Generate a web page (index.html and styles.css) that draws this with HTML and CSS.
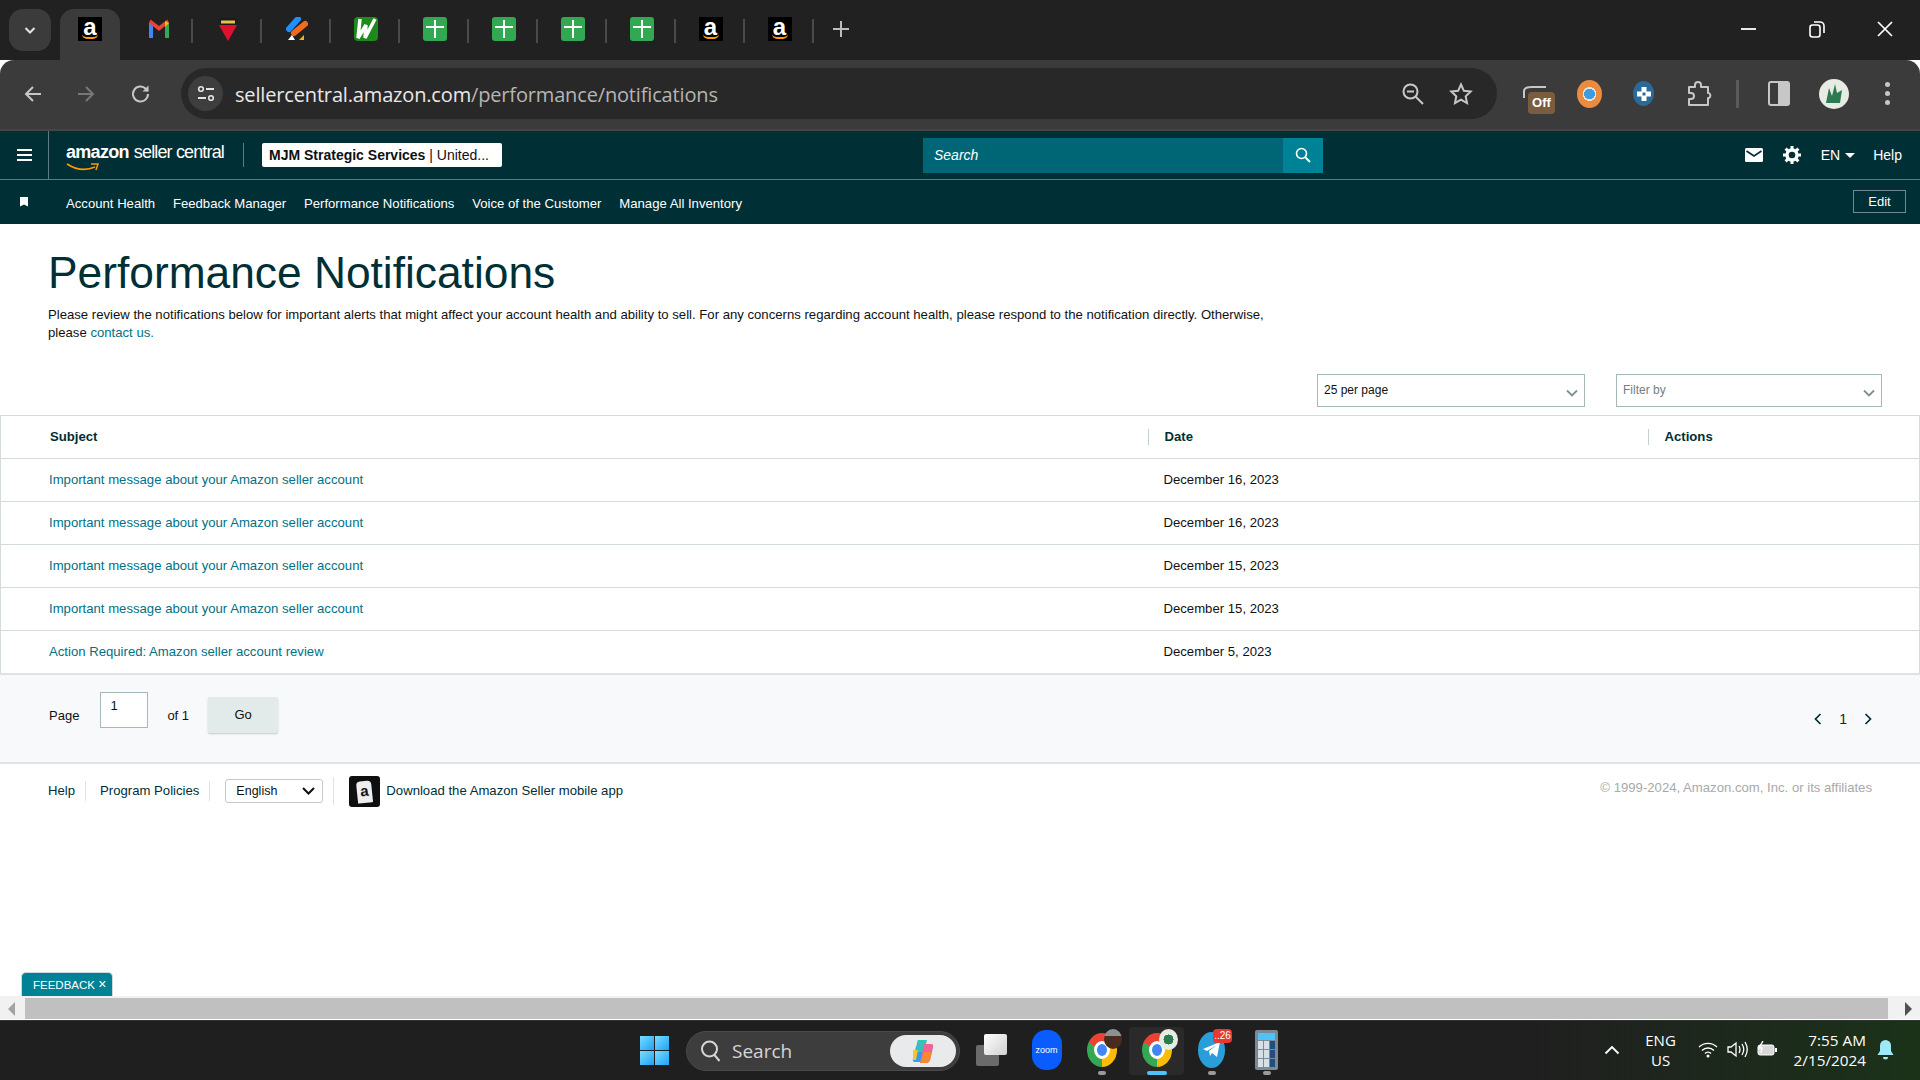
FILE: index.html
```html
<!DOCTYPE html>
<html lang="en">
<head>
<meta charset="UTF-8" />
<meta name="viewport" content="width=device-width, initial-scale=1.0" />
<title>Performance Notifications</title>
<link rel="stylesheet" href="styles.css">
</head>
<body>
<!-- browser tab strip -->
<div class="tabstrip">
  <div class="tab-search"><svg width="14" height="14" viewBox="0 0 14 14"><path d="M2.5 5l4.500 4.500L11.500 5" fill="none" stroke="#e3e3e3" stroke-width="2"/></svg></div>
  <div class="tab active"><span class="fav fav-amazon">a<i></i></span></div>
  <div class="tab sep">
    <svg width="24" height="24" viewBox="0 0 24 24"><path d="M2 21V6l4-2v17z" fill="#4285f4"/><path d="M22 21V6l-4-2v17z" fill="#34a853"/><path d="M2 6l10 8 10-8-1.500-3.500L12 9 3.500 2.500z" fill="#ea4335"/><path d="M18 4l4 2-4 4z" fill="#fbbc04"/></svg>
  </div>
  <div class="tab sep">
    <svg width="24" height="24" viewBox="0 0 24 24"><path d="M3 8h18l-9 16z" fill="#e0102f"/><path d="M4 1h16l1 7H3z" fill="#1b1b1b"/><path d="M5 5h14" stroke="#e7c34a" stroke-width="3"/></svg>
  </div>
  <div class="tab sep">
    <svg width="24" height="24" viewBox="0 0 24 24"><path d="M4 12L13 2" stroke="#1f8fff" stroke-width="6" stroke-linecap="round"/><path d="M9 16L20 7" stroke="#f26a1b" stroke-width="6" stroke-linecap="round"/><path d="M3 23l4-5 3 5z" fill="#fff"/><path d="M14 23l5-5v5z" fill="#f5b400"/></svg>
  </div>
  <div class="tab sep">
    <span class="fav fav-w"><svg width="24" height="24" viewBox="0 0 24 24"><path d="M6 2L4 21 12 8l-1 13L21 2" fill="none" stroke="#fff" stroke-width="3.500"/></svg></span>
  </div>
  <div class="tab sep"><span class="fav fav-plus"></span></div>
  <div class="tab sep"><span class="fav fav-plus"></span></div>
  <div class="tab sep"><span class="fav fav-plus"></span></div>
  <div class="tab sep"><span class="fav fav-plus"></span></div>
  <div class="tab sep"><span class="fav fav-amazon">a<i></i></span></div>
  <div class="tab sep"><span class="fav fav-amazon">a<i></i></span></div>
  <div class="tab-new"><svg width="18" height="18" viewBox="0 0 18 18"><path d="M9 1v16M1 9h16" stroke="#bdbdbd" stroke-width="2"/></svg></div>
  <div class="window-btns">
    <svg width="16" height="16" viewBox="0 0 16 16"><path d="M0 8h15" stroke="#fff" stroke-width="1.800"/></svg>
    <svg width="16" height="18" viewBox="0 0 16 18"><rect x="1" y="5" width="10" height="12" rx="2.500" fill="none" stroke="#fff" stroke-width="1.600"/><path d="M5 2h6a4 4 0 0 1 4 4v7" fill="none" stroke="#fff" stroke-width="1.600"/></svg>
    <svg width="16" height="16" viewBox="0 0 16 16"><path d="M1 1l14 14M15 1L1 15" stroke="#fff" stroke-width="1.700"/></svg>
  </div>
</div>

<!-- browser toolbar -->
<div class="toolbar">
  <svg class="nav-back" width="20" height="20" viewBox="0 0 20 20"><path d="M18 10H3M10 3l-7 7 7 7" fill="none" stroke="#c7c7c7" stroke-width="2"/></svg>
  <svg class="nav-forward" width="20" height="20" viewBox="0 0 20 20"><path d="M2 10h15M10 3l7 7-7 7" fill="none" stroke="#777" stroke-width="2"/></svg>
  <svg class="nav-reload" width="22" height="22" viewBox="0 0 22 22"><path d="M18 11a7.500 7.500 0 1 1-2.200-5.300L18 8" fill="none" stroke="#c7c7c7" stroke-width="2"/><path d="M18.500 2.500V8.500H12.500z" fill="#c7c7c7"/></svg>
  <div class="omnibox">
    <span class="site-info"><svg width="20" height="20" viewBox="0 0 20 20"><circle cx="5" cy="5" r="2.300" fill="none" stroke="#e3e3e3" stroke-width="1.600"/><path d="M10 5h8M2 14h8" stroke="#e3e3e3" stroke-width="1.800"/><circle cx="15" cy="14" r="2.300" fill="none" stroke="#e3e3e3" stroke-width="1.600"/></svg></span>
    <span class="url">sellercentral.amazon.com<span class="url-path">/performance/notifications</span></span>
    <svg class="omni-zoom" width="24" height="24" viewBox="0 0 24 24"><circle cx="9.500" cy="9.500" r="7" fill="none" stroke="#c7c7c7" stroke-width="2"/><path d="M14.500 14.500l7.500 7.500M6 9.500h7" stroke="#c7c7c7" stroke-width="2"/></svg>
    <svg class="omni-star" width="24" height="24" viewBox="0 0 24 24"><path d="M12 2.500l2.900 6.300 6.800.8-5 4.700 1.300 6.800-6-3.400-6 3.400 1.300-6.800-5-4.700 6.800-.8z" fill="none" stroke="#c7c7c7" stroke-width="2"/></svg>
  </div>
  <div class="ext-off"><svg width="26" height="14" viewBox="0 0 26 14"><path d="M2 13V6q0-4 8-4h14" fill="none" stroke="#c7c7c7" stroke-width="2"/></svg><span>Off</span></div>
  <span class="ext-orange"></span>
  <span class="ext-blue"><svg width="16" height="16" viewBox="0 0 16 16"><path d="M5.500 1h5v4.500H15v5h-4.500V15h-5v-4.500H1v-5h4.500z" fill="#fff"/><rect x="6.500" y="6.500" width="3" height="3" fill="#2a6a9a"/></svg></span>
  <svg class="ext-puzzle" width="26" height="26" viewBox="0 0 26 26"><path d="M3 6h6V4a3 3 0 0 1 6 0v2h7v6h1a3 3 0 0 1 0 5h-1v7H3v-6h2a3 3 0 0 0 0-6H3z" fill="none" stroke="#c7c7c7" stroke-width="2" stroke-linejoin="round"/></svg>
  <span class="tool-sep"></span>
  <span class="side-panel"><i></i></span>
  <span class="avatar"><svg width="22" height="24" viewBox="0 0 22 24"><path d="M3 21L6 6l3 8 3-12 2 9 5-3-2 13z" fill="#2c7a4f"/></svg></span>
  <span class="menu-dots"><i></i><i></i><i></i></span>
</div>

<!-- seller central top bar -->
<div class="sc-top">
  <div class="sc-burger"><i></i><i></i><i></i></div>
  <div class="sc-logo">
    <span class="logo-amazon">amazon</span><span class="logo-seller">seller central</span>
    <svg class="logo-smile" width="36" height="9" viewBox="0 0 36 9"><path d="M1 1q14 9 28 3" fill="none" stroke="#f90" stroke-width="1.800"/><path d="M25 1l7 0-2 6" fill="none" stroke="#f90" stroke-width="1.500"/></svg>
  </div>
  <span class="sc-logo-sep"></span>
  <div class="account-box"><b>MJM Strategic Services</b> | United...</div>
  <div class="sc-search">
    <div class="search-input">Search</div>
    <div class="search-btn"><svg width="16" height="16" viewBox="0 0 16 16"><circle cx="6.500" cy="6.500" r="5" fill="none" stroke="#fff" stroke-width="1.600"/><path d="M10 10l5 5" stroke="#fff" stroke-width="2"/></svg></div>
  </div>
  <div class="sc-right">
    <svg width="18" height="14" viewBox="0 0 18 14"><rect width="18" height="14" rx="1.500" fill="#fff"/><path d="M1.500 3L9 8l7.500-5" fill="none" stroke="#002f36" stroke-width="1.600"/></svg>
    <svg class="sc-gear" width="18" height="18" viewBox="0 0 18 18"><circle cx="9" cy="9" r="5" fill="none" stroke="#fff" stroke-width="3.400"/><path d="M9 0v4M9 14v4M0 9h4M14 9h4M2.600 2.600l2.800 2.800M12.600 12.600l2.800 2.800M15.400 2.600l-2.800 2.800M5.400 12.600l-2.800 2.800" stroke="#fff" stroke-width="3"/></svg>
    <span class="sc-lang">EN<i></i></span>
    <span class="sc-help">Help</span>
  </div>
</div>

<!-- seller central bookmarks -->
<div class="sc-nav">
  <span class="bookmark"></span>
  <a>Account Health</a>
  <a>Feedback Manager</a>
  <a>Performance Notifications</a>
  <a>Voice of the Customer</a>
  <a>Manage All Inventory</a>
  <button class="edit-btn">Edit</button>
</div>

<div class="main">
  <div class="intro">
    <h1>Performance Notifications</h1>
    <p><span>Please review the notifications below for important alerts that might affect your account health and ability to sell. For any concerns regarding account health, please respond to the notification directly. Otherwise,</span><br>please <a class="link">contact us.</a></p>
  </div>

  <div class="filters">
    <div class="dropdown perpage">25 per page<svg width="12" height="8" viewBox="0 0 12 8"><path d="M1 1.500l5 5 5-5" fill="none" stroke="#7d9095" stroke-width="1.800"/></svg></div>
    <div class="dropdown filterby">Filter by<svg width="12" height="8" viewBox="0 0 12 8"><path d="M1 1.500l5 5 5-5" fill="none" stroke="#7d9095" stroke-width="1.800"/></svg></div>
  </div>

  <table class="notices">
    <tr>
      <th class="col-subject"><span>Subject</span></th>
      <th class="col-date"><span>Date</span></th>
      <th class="col-actions"><span>Actions</span></th>
    </tr>
    <tr><td><a class="link">Important message about your Amazon seller account</a></td><td>December 16, 2023</td><td></td></tr>
    <tr><td><a class="link">Important message about your Amazon seller account</a></td><td>December 16, 2023</td><td></td></tr>
    <tr><td><a class="link">Important message about your Amazon seller account</a></td><td>December 15, 2023</td><td></td></tr>
    <tr><td><a class="link">Important message about your Amazon seller account</a></td><td>December 15, 2023</td><td></td></tr>
    <tr><td><a class="link">Action Required: Amazon seller account review</a></td><td>December 5, 2023</td><td></td></tr>
  </table>

  <div class="pager">
    <span class="pager-label">Page</span>
    <span class="pager-input">1</span>
    <span class="pager-of">of 1</span>
    <button class="go-btn">Go</button>
    <div class="pager-right">
      <svg width="8" height="12" viewBox="0 0 8 12"><path d="M6.500 1l-5 5 5 5" fill="none" stroke="#002f36" stroke-width="1.700"/></svg>
      <span>1</span>
      <svg width="8" height="12" viewBox="0 0 8 12"><path d="M1.500 1l5 5-5 5" fill="none" stroke="#002f36" stroke-width="1.700"/></svg>
    </div>
  </div>

  <div class="footer">
    <a class="foot-link foot-help">Help</a>
    <a class="foot-link foot-policies">Program Policies</a>
    <div class="lang-select">English<svg width="13" height="8" viewBox="0 0 13 8"><path d="M1 1l5.500 5.500L12 1" fill="none" stroke="#0f1111" stroke-width="2"/></svg></div>
    <span class="foot-sep"></span>
    <span class="app-badge"><span class="app-tag">a</span></span>
    <a class="foot-link">Download the Amazon Seller mobile app</a>
    <span class="copyright">© 1999-2024, Amazon.com, Inc. or its affiliates</span>
  </div>

  <div class="feedback">FEEDBACK <span>×</span></div>
</div>

<!-- horizontal scrollbar -->
<div class="hscroll">
  <div class="hscroll-left"><i></i></div>
  <div class="hscroll-thumb"></div>
  <div class="hscroll-right"><i></i></div>
</div>

<!-- windows taskbar -->
<div class="taskbar">
  <span class="win-logo"><i></i><i></i><i></i><i></i></span>
  <div class="task-search">
    <svg width="22" height="24" viewBox="0 0 22 24"><circle cx="9.500" cy="10" r="7.500" fill="none" stroke="#d6d6d6" stroke-width="2"/><path d="M14.500 16l5 6" stroke="#d6d6d6" stroke-width="2"/></svg>
    <span>Search</span>
    <span class="copilot"><svg width="24" height="26" viewBox="0 0 24 26"><path d="M7 2h8l-4 22H4q-3 0-2-4z" fill="#2f9df0"/><path d="M7 2h9l-3 12H5z" fill="#36c2b4"/><path d="M13 6h7q3 0 2 4l-3 12q-1 3-4 3H9z" fill="#f0649a"/><path d="M13 14h8l-2 8q-1 3-4 3H9z" fill="#f58a32"/><path d="M2 12h5l-2 10H2z" fill="#f3c62f"/></svg></span>
  </div>
  <div class="task-icon"><span class="files-icon"><i></i><b></b></span></div>
  <div class="task-icon"><span class="zoom-icon">zoom</span></div>
  <div class="task-icon running"><span class="chrome"><i></i></span><span class="badge-face"></span></div>
  <div class="task-icon running current"><span class="chrome"><i></i></span><span class="badge-plant"></span></div>
  <div class="task-icon running"><span class="telegram"><svg width="20" height="18" viewBox="0 0 20 18"><path d="M1 8l17-7-3 15-5-4-2 3-1-5 8-6-10 6z" fill="#fff"/></svg></span><span class="badge-count">..26</span></div>
  <div class="task-icon running"><span class="calc"><i class="calc-screen"></i><i></i><i></i><i class="calc-dark"></i><i></i><i></i><i class="calc-dark"></i><i></i><i></i><i class="calc-dark"></i></span></div>
  <div class="tray">
    <svg class="tray-up" width="16" height="10" viewBox="0 0 16 10"><path d="M1.500 8.500L8 2l6.500 6.500" fill="none" stroke="#fff" stroke-width="1.800"/></svg>
    <div class="tray-lang">ENG<br>US</div>
    <svg width="20" height="17" viewBox="0 0 20 17"><path d="M1 6a13 13 0 0 1 18 0M4 9.500a8.500 8.500 0 0 1 12 0M7 12.500a4 4 0 0 1 6 0" fill="none" stroke="#fff" stroke-width="1.400"/><circle cx="10" cy="15" r="1.500" fill="#fff"/></svg>
    <svg width="21" height="17" viewBox="0 0 21 17"><path d="M1 6h3l5-4v13l-5-4H1z" fill="none" stroke="#fff" stroke-width="1.300"/><path d="M12 5q2 3.500 0 7M15 3q3.500 5.500 0 11M18 1q4.500 7.500 0 15" fill="none" stroke="#fff" stroke-width="1.300"/></svg>
    <svg width="21" height="17" viewBox="0 0 21 17"><rect x="1" y="4" width="16" height="10" rx="2" fill="#d8d8d8" stroke="#fff"/><rect x="18" y="7" width="2" height="4" fill="#fff"/><path d="M6 0L2 7h3l-1 5" fill="none" stroke="#fff" stroke-width="1.400"/></svg>
    <div class="tray-clock">7:55 AM<br>2/15/2024</div>
    <svg width="17" height="21" viewBox="0 0 17 21"><path d="M8.500 1a5.500 5.500 0 0 1 5.500 5.500V12l2.500 4H.5L3 12V6.500A5.500 5.500 0 0 1 8.500 1z" fill="#9fe8f7"/><path d="M6 18h5a2.500 2.500 0 0 1-5 0z" fill="#9fe8f7"/></svg>
  </div>
</div>
</body>
</html>
```
FILE: styles.css
```css
* { box-sizing: border-box; }
html, body { margin: 0; padding: 0; height: 100%; overflow: hidden; }
body { width: 1920px; height: 1080px; display: flex; flex-direction: column; font-family: "Liberation Sans", Arial, sans-serif; background: #fff; color: #0f1111; }
i { display: block; font-style: normal; }

/* tab strip */
.tabstrip { height: 60px; background: #202120; display: flex; align-items: flex-end; flex-shrink: 0; }
.tab-search { width: 42px; height: 42px; margin: 0 9px 9px 9px; background: #3b3b3b; border-radius: 14px; display: flex; align-items: center; justify-content: center; }
.tab { width: 69px; height: 51px; display: flex; align-items: center; justify-content: center; padding-bottom: 12px; position: relative; }
.tab.active { width: 60px; background: #3b3b3b; border-radius: 14px 14px 0 0; margin-right: 4px; }
.sep::after { content: ""; position: absolute; right: 0; top: 10px; width: 2px; height: 24px; background: #4a4a4a; }
.fav { width: 24px; height: 24px; display: block; }
.fav-amazon { background: #000; color: #fff; font-size: 24px; font-weight: bold; line-height: 20px; text-align: center; position: relative; }
.fav-amazon i { position: absolute; left: 4px; bottom: 2px; width: 16px; height: 5px; border-bottom: 2px solid #f90; border-radius: 0 0 10px 10px; }
.fav-w { background: #1e8a1e; border-radius: 4px; }
.fav-plus { background: #33a853; border-radius: 3px; position: relative; }
.fav-plus::before { content: ""; position: absolute; left: 11px; top: 3px; width: 2px; height: 18px; background: #fff; }
.fav-plus::after { content: ""; position: absolute; left: 3px; top: 9px; width: 18px; height: 2px; background: #fff; }
.tab-new { width: 53px; height: 51px; display: flex; align-items: center; justify-content: center; padding-bottom: 12px; }
.window-btns { margin-left: auto; height: 60px; display: flex; align-items: center; padding-right: 27px; gap: 52px; padding-bottom: 2px; }

/* toolbar */
.toolbar { height: 71px; background: #3b3b3b; border-bottom: 2px solid #454545; border-radius: 14px 14px 0 0; display: flex; align-items: center; flex-shrink: 0; padding-bottom: 2px; }
.nav-back { margin-left: 23px; }
.nav-forward { margin-left: 33px; }
.nav-reload { margin-left: 34px; }
.omnibox { width: 1316px; height: 51px; margin-left: 29px; background: #282828; border-radius: 26px; display: flex; align-items: center; padding-left: 7px; }
.site-info { width: 35px; height: 35px; background: #3e3e3e; border-radius: 50%; display: flex; align-items: center; justify-content: center; }
.url { margin: 2px 0 0 12px; font-family: "Open Sans", sans-serif; font-size: 20px; color: #e8e8e8; letter-spacing: -0.16px; }
.url-path { color: #b5b5b5; }
.omni-zoom { margin-left: auto; }
.omni-star { margin-left: 24px; margin-right: 24px; }
.ext-off { width: 36px; height: 36px; margin-left: 25px; position: relative; }
.ext-off svg { display: block; margin-top: 9px; }
.ext-off span { position: absolute; left: 6px; top: 16px; width: 27px; height: 22px; background: #7a5c3e; border-radius: 4px; color: #fff; font-size: 13px; font-weight: bold; text-align: center; line-height: 22px; }
.ext-orange { width: 25px; height: 28px; margin-left: 19px; border-radius: 50%; background: radial-gradient(circle, #3d9be0 0 28%, #e9e4d8 29% 36%, #ec8b3d 37% 88%, #ddd 89%); }
.ext-blue { width: 21px; height: 25px; margin-left: 31px; border-radius: 50%; background: #2a6a9a; display: flex; align-items: center; justify-content: center; }
.ext-puzzle { margin-left: 32px; }
.tool-sep { width: 3px; height: 28px; background: #5a5a5a; margin-left: 24px; }
.side-panel { width: 22px; height: 25px; margin-left: 29px; border: 2px solid #c7c7c7; border-radius: 3px; display: flex; justify-content: flex-end; }
.side-panel i { width: 10px; background: #c7c7c7; }
.avatar { width: 30px; height: 30px; margin-left: 29px; border-radius: 50%; background: #e8ebe4; display: flex; align-items: center; justify-content: center; }
.menu-dots { margin-left: 36px; display: flex; flex-direction: column; gap: 4px; }
.menu-dots i { width: 5px; height: 5px; border-radius: 50%; background: #c7c7c7; }

/* seller central header */
.sc-top { height: 49px; background: #002f36; border-bottom: 1px solid #5d7d82; display: flex; align-items: center; flex-shrink: 0; color: #fff; }
.sc-burger { width: 49px; height: 48px; border-right: 1px solid #5d7d82; display: flex; flex-direction: column; justify-content: center; gap: 3px; padding-left: 17px; }
.sc-burger i { width: 15px; height: 2px; background: #fff; }
.sc-logo { margin-left: 17px; width: 177px; height: 40px; position: relative; display: flex; align-items: baseline; padding-top: 7px; color: #fff; }
.logo-amazon { font-size: 18px; font-weight: bold; letter-spacing: -0.7px; }
.logo-seller { font-size: 18px; letter-spacing: -0.85px; margin-left: 5px; white-space: nowrap; }
.logo-smile { position: absolute; left: 0; top: 28px; }
.sc-logo-sep { width: 1px; height: 24px; background: #5d7d82; }
.account-box { width: 240px; height: 24px; margin-left: 18px; padding-left: 7px; background: #fff; border-radius: 2px; color: #0f1111; font-size: 14px; line-height: 24px; white-space: nowrap; }
.account-box b { font-weight: bold; }
.sc-search { margin-left: 421px; display: flex; width: 400px; height: 35px; }
.search-input { flex: 1; background: #006574; font-style: italic; font-size: 14px; line-height: 35px; padding-left: 11px; color: #fff; }
.search-btn { width: 40px; background: #008296; display: flex; align-items: center; justify-content: center; }
.sc-right { margin-left: auto; display: flex; align-items: center; padding-right: 18px; font-size: 14px; }
.sc-gear { margin-left: 20px; }
.sc-lang { margin-left: 20px; display: flex; align-items: center; }
.sc-lang i { width: 0; height: 0; margin-left: 5px; border: 5px solid transparent; border-top-color: #fff; border-bottom: 0; }
.sc-help { margin-left: 18px; }
.sc-nav { height: 44px; background: #002f36; display: flex; align-items: center; flex-shrink: 0; padding: 2px 14px 0 0; color: #fff; font-size: 13.150px; }
.sc-nav a { margin-right: 17.800px; white-space: nowrap; }
.bookmark { width: 8px; height: 10px; margin: 0 38px 3px 20px; background: #fff; clip-path: polygon(0 0, 100% 0, 100% 100%, 50% 80%, 0 100%); }
.edit-btn { margin-left: auto; margin-bottom: 4px; width: 53px; height: 23px; padding: 0; background: transparent; border: 1px solid #6f8b90; color: #fff; font: 13px "Liberation Sans", Arial, sans-serif; }

/* page content */
.main { flex: 1; position: relative; min-height: 0; }
.intro { padding: 0 0 0 48px; width: 1280px; }
h1 { margin: 0; padding-top: 24px; font-size: 44.300px; font-weight: normal; line-height: 50px; color: #002f36; }
.intro p { margin: 8px 0 0 0; font-size: 13.150px; line-height: 18px; color: #0f1111; }
.link { color: #007185; }
.filters { display: flex; padding-left: 1317px; gap: 31px; margin-top: 32px; }
.dropdown { height: 33px; border: 1px solid #a6b7ba; display: flex; align-items: center; justify-content: space-between; padding: 0 6px 2px 6px; font-size: 12px; color: #0f1111; }
.dropdown svg { margin-top: 6px; }
.perpage { width: 268px; }
.filterby { width: 266px; color: #6f7f83; }
.notices { width: 100%; margin-top: 8px; border-collapse: collapse; table-layout: fixed; font-size: 13.150px; border-left: 1px solid #d5dbdb; border-right: 1px solid #d5dbdb; }
.notices th, .notices td { height: 43px; padding: 0; text-align: left; border-bottom: 1px solid #d5dbdb; font-weight: normal; }
.notices tr:first-child th { border-top: 1px solid #d5dbdb; }
.notices td { padding-bottom: 2px; }
.notices tr:last-child td { border-bottom: 0; height: 42px; padding-bottom: 0; }
.notices td:first-child { padding-left: 48px; }
.notices td:nth-child(2) { padding-left: 16px; }
.notices th { font-weight: bold; color: #002f36; padding-bottom: 1px; }
.notices th.col-subject { width: 1147px; padding-left: 49px; }
.col-date { width: 500px; }
.col-date span, .col-actions span { display: block; line-height: 16px; border-left: 1px solid #c5cfd0; }
.col-date span { padding-left: 16px; }
.col-actions span { padding-left: 16px; }
.pager { height: 91px; background: #f8f9fb; border-top: 2px solid #dfe3e6; border-bottom: 2px solid #dfe3e6; display: flex; align-items: flex-start; font-size: 13px; color: #0f1111; padding-left: 49px; }
.pager-label { margin-top: 33px; }
.pager-input { width: 48px; height: 36px; margin: 17px 0 0 21px; padding: 5px 0 0 9px; background: #fff; border: 1px solid #a6b7ba; }
.pager-of { margin: 33px 0 0 19px; }
.go-btn { width: 70px; height: 36px; margin: 22px 0 0 19px; background: #e3eaea; border: 0; border-radius: 2px; box-shadow: 0 1px 2px rgba(0,0,0,0.2); font: 13px "Liberation Sans", Arial, sans-serif; color: #0f1111; }
.pager-right { margin: 36px 48px 0 auto; display: flex; align-items: center; gap: 17px; font-size: 14px; color: #002f36; }
.footer { display: flex; align-items: center; height: 54px; padding: 0 48px; font-size: 13.150px; color: #002f36; }
.foot-help { padding-right: 10px; border-right: 1px solid #e0e3e6; line-height: 20px; }
.foot-policies { padding: 0 10px 0 14px; border-right: 1px solid #e0e3e6; line-height: 20px; }
.lang-select { width: 98px; height: 24px; margin: 0 10px 0 15px; padding: 0 7px 0 10px; border: 1px solid #c5c9cc; border-radius: 3px; display: flex; align-items: center; justify-content: space-between; font-size: 12.500px; color: #0f1111; }
.foot-sep { width: 1px; height: 28px; background: #e0e3e6; }
.app-badge { width: 31px; height: 31px; margin: 2px 6px 0 15px; background: #0f0f0f; border-radius: 3px; display: flex; align-items: center; justify-content: center; }
.app-tag { width: 15px; height: 22px; background: #eee; color: #111; font-size: 15px; font-weight: bold; line-height: 20px; text-align: center; transform: rotate(-6deg); border-radius: 4px 4px 1px 1px; }
.copyright { margin-left: auto; color: #a9a9a9; font-size: 13.150px; margin-bottom: 6px; }
.feedback { position: absolute; left: 21px; bottom: 0; width: 92px; height: 24px; background: #008296; border: 1px solid #cfd8da; border-bottom: 0; border-radius: 5px 5px 0 0; color: #fff; font-size: 11.500px; line-height: 23px; padding-left: 11px; white-space: nowrap; }
.feedback span { font-size: 14px; }

/* scrollbar */
.hscroll { height: 24px; background: #f1f1f1; display: flex; padding-top: 2px; flex-shrink: 0; border-bottom: 1px solid #fff; }
.hscroll-left { width: 25px; display: flex; align-items: center; padding-left: 8px; }
.hscroll-left i { border: 7px solid transparent; border-left: 0; border-right: 7px solid #a3a3a3; }
.hscroll-thumb { flex: 1; background: #c0c0c0; }
.hscroll-right { width: 32px; display: flex; align-items: center; padding-left: 17px; }
.hscroll-right i { border: 7px solid transparent; border-right: 0; border-left: 7px solid #505050; }

/* taskbar */
.taskbar { height: 60px; flex-shrink: 0; background: linear-gradient(90deg, #1f1f1f 0, #1f1f1f 80%, #1b3219 100%); border-top: 1px solid #333; display: flex; align-items: center; padding-left: 640px; color: #fff; font-family: "Open Sans", sans-serif; }
.win-logo { width: 29px; height: 29px; display: grid; grid-template-columns: 1fr 1fr; gap: 1px; }
.win-logo i { background: linear-gradient(135deg, #7ddcff, #1ba3f5); }
.task-search { width: 274px; height: 40px; margin-left: 17px; background: #3d3d3d; border: 1px solid #4a4a4a; border-radius: 20px; display: flex; align-items: center; padding-left: 13px; font-size: 19px; color: #d6d6d6; }
.task-search span:nth-child(2) { margin-left: 10px; }
.copilot { margin-left: auto; margin-right: 3px; width: 66px; height: 32px; background: #e9eaec; border-radius: 16px; display: flex; align-items: center; justify-content: center; }
.task-icon { width: 55px; height: 48px; position: relative; display: flex; align-items: center; justify-content: center; padding-bottom: 2px; border-radius: 4px; }
.task-search + .task-icon { margin-left: 4px; }
.task-icon.running::after { content: ""; position: absolute; bottom: 0; left: 24px; width: 8px; height: 4px; border-radius: 2px; background: #9a9a9a; }
.task-icon.current { background: #2a2a2a; }
.task-icon.current::after { width: 20px; left: 18px; background: #4fc3f7; }
.files-icon { width: 31px; height: 32px; position: relative; }
.files-icon b { position: absolute; right: 0; top: 0; width: 23px; height: 21px; background: linear-gradient(135deg, #fff, #d0d0d0); border-radius: 2px; }
.files-icon i { position: absolute; left: 0; bottom: 0; width: 23px; height: 21px; background: #6b6b6b; border-radius: 2px; }
.zoom-icon { width: 30px; height: 40px; background: #0b5cff; border-radius: 14px; font-family: "Liberation Sans", sans-serif; font-size: 9px; line-height: 40px; text-align: center; color: #fff; }
.chrome { width: 30px; height: 34px; border-radius: 50%; background: conic-gradient(from -60deg, #ea4335 0 120deg, #fbbc04 120deg 240deg, #34a853 240deg 360deg); display: flex; align-items: center; justify-content: center; }
.chrome i { width: 16px; height: 18px; border-radius: 50%; background: #4285f4; border: 3px solid #fff; }
.badge-face { position: absolute; left: 30px; top: 2px; width: 18px; height: 20px; border-radius: 50%; background: linear-gradient(#8a9197 0 35%, #4a2c1e 36%); }
.badge-plant { position: absolute; left: 30px; top: 2px; width: 19px; height: 21px; border-radius: 50%; background: radial-gradient(circle, #2c7a4f 0 35%, #e8ebe4 36%); }
.telegram { width: 27px; height: 36px; border-radius: 50%; background: #2a9ed8; display: flex; align-items: center; justify-content: center; }
.badge-count { position: absolute; left: 29px; top: 2px; width: 19px; height: 14px; background: #e8382f; border-radius: 4px; font-family: "Liberation Sans", sans-serif; font-size: 10px; line-height: 14px; text-align: center; }
.calc { width: 23px; height: 40px; padding: 3px; background: #7d8a96; border-radius: 2px; display: grid; grid-template-columns: repeat(3, 1fr); grid-template-rows: 7px repeat(3, 1fr); gap: 1px; }
.calc i { background: #d8dfe5; }
.calc i.calc-screen { grid-column: span 3; background: #4fc3f7; }
.calc i.calc-dark { background: #214e80; }
.tray { margin-left: auto; display: flex; align-items: center; padding: 0 26px 2px 0; font-size: 15px; line-height: 20px; }
.tray-up { margin-right: 23px; }
.tray-lang { width: 36px; text-align: center; margin-right: 19px; }
.tray svg + svg { margin-left: 9px; }
.tray-clock { text-align: right; margin: 0 11px 0 16px; font-size: 15.300px; }
```
